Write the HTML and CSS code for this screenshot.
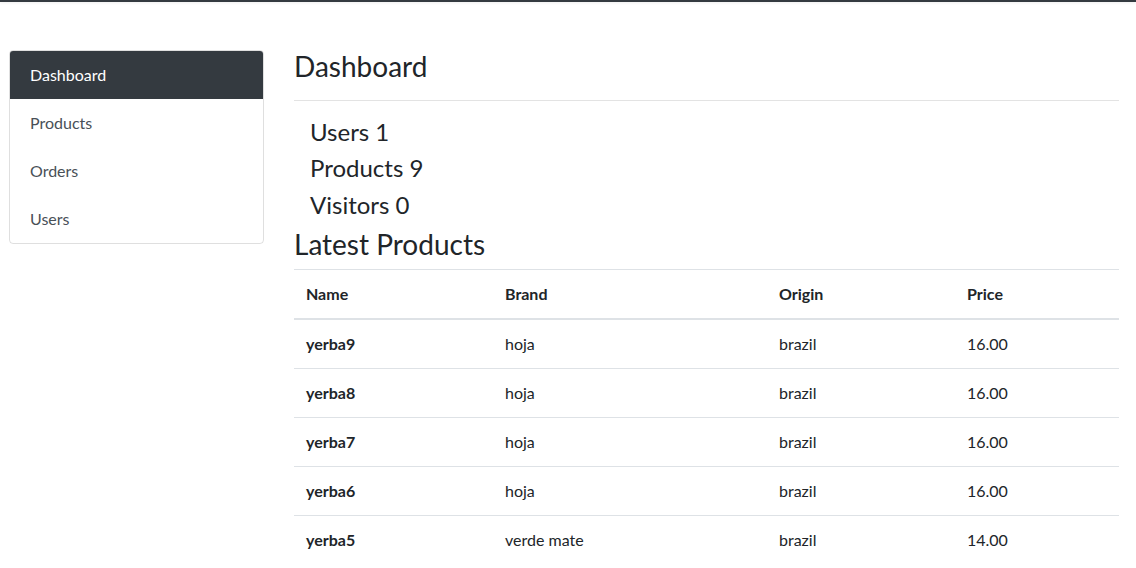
FILE: index.html
```html
<!DOCTYPE html>
<html lang="en">
<head>
<meta charset="utf-8">
<title>Dashboard</title>
<link rel="stylesheet" href="styles.css">
</head>
<body>
<div class="topbar"></div>
<div class="page">
  <nav class="side">
    <a class="side-item active" href="#">Dashboard</a>
    <a class="side-item" href="#">Products</a>
    <a class="side-item" href="#">Orders</a>
    <a class="side-item" href="#">Users</a>
  </nav>
  <main class="main">
    <h3 class="title title-first">Dashboard</h3>
    <ul class="stats">
      <li class="stat">Users 1</li>
      <li class="stat">Products 9</li>
      <li class="stat">Visitors 0</li>
    </ul>
    <h3 class="title title-second">Latest Products</h3>
    <table class="tbl">
      <colgroup>
        <col class="c-name"><col class="c-brand"><col class="c-origin"><col class="c-price">
      </colgroup>
      <thead>
        <tr><th>Name</th><th>Brand</th><th>Origin</th><th>Price</th></tr>
      </thead>
      <tbody>
        <tr><th>yerba9</th><td>hoja</td><td>brazil</td><td>16.00</td></tr>
        <tr><th>yerba8</th><td>hoja</td><td>brazil</td><td>16.00</td></tr>
        <tr><th>yerba7</th><td>hoja</td><td>brazil</td><td>16.00</td></tr>
        <tr><th>yerba6</th><td>hoja</td><td>brazil</td><td>16.00</td></tr>
        <tr><th>yerba5</th><td>verde mate</td><td>brazil</td><td>14.00</td></tr>
      </tbody>
    </table>
  </main>
</div>
</body>
</html>
```

FILE: styles.css
```css
* { box-sizing: border-box; }
html, body { margin: 0; padding: 0; }
body {
  font-family: Lato, "Liberation Sans", sans-serif;
  font-size: 16px;
  line-height: 1.5;
  color: #212529;
  background: #fff;
  overflow: hidden;
}
.topbar {
  height: 2px;
  background: #343a40;
  box-shadow: 0 1px 3px rgba(0,0,0,0.08);
}
.page {
  display: flex;
  align-items: flex-start;
  padding: 48px 0 0 9px;
  gap: 30px;
}
.side {
  width: 255px;
  flex: none;
  display: flex;
  flex-direction: column;
  border: 1px solid rgba(0,0,0,0.125);
  border-radius: 4px;
  overflow: hidden;
}
.side-item {
  display: block;
  padding: 12px 20px;
  color: #495057;
  text-decoration: none;
  line-height: 24px;
}
.side-item.active {
  background: #343a40;
  color: #fff;
  margin: -1px -1px 0;
  padding: 13px 21px 12px;
}
.main {
  width: 825px;
  flex: none;
}
.title {
  margin: 0;
  font-size: 28px;
  font-weight: 400;
  line-height: 1.2;
}
.title-first {
  padding-bottom: 16px;
  border-bottom: 1px solid #e3e3e3;
}
.title-second {
  margin-bottom: 7px;
}
.stats {
  list-style: none;
  margin: 0;
  padding: 17px 0 0 16px;
}
.stat {
  font-size: 24px;
  line-height: 1.2;
  margin-bottom: 8px;
}
.tbl {
  width: 100%;
  border-collapse: collapse;
  table-layout: fixed;
}
.c-name { width: 199px; }
.c-brand { width: 274px; }
.c-origin { width: 188px; }
.c-price { width: 164px; }
.tbl th, .tbl td {
  padding: 12px;
  text-align: left;
  vertical-align: top;
  border-top: 1px solid #dee2e6;
  line-height: 24px;
}
.tbl th { font-weight: 700; }
.tbl thead th { border-bottom: 2px solid #dee2e6; }
```
